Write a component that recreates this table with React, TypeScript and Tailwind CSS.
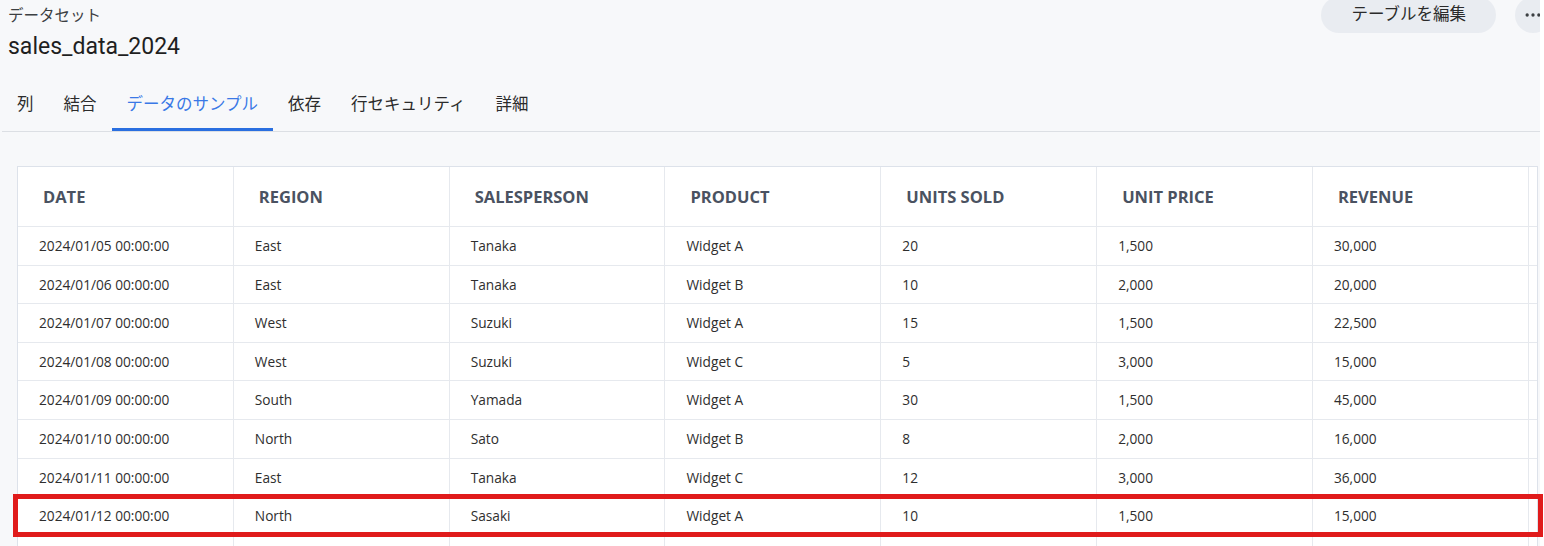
import { MoreHorizontal } from 'lucide-react'

const columns = ['DATE', 'REGION', 'SALESPERSON', 'PRODUCT', 'UNITS SOLD', 'UNIT PRICE', 'REVENUE']

const rows = [
  ['2024/01/05 00:00:00', 'East', 'Tanaka', 'Widget A', '20', '1,500', '30,000'],
  ['2024/01/06 00:00:00', 'East', 'Tanaka', 'Widget B', '10', '2,000', '20,000'],
  ['2024/01/07 00:00:00', 'West', 'Suzuki', 'Widget A', '15', '1,500', '22,500'],
  ['2024/01/08 00:00:00', 'West', 'Suzuki', 'Widget C', '5', '3,000', '15,000'],
  ['2024/01/09 00:00:00', 'South', 'Yamada', 'Widget A', '30', '1,500', '45,000'],
  ['2024/01/10 00:00:00', 'North', 'Sato', 'Widget B', '8', '2,000', '16,000'],
  ['2024/01/11 00:00:00', 'East', 'Tanaka', 'Widget C', '12', '3,000', '36,000'],
  ['2024/01/12 00:00:00', 'North', 'Sasaki', 'Widget A', '10', '1,500', '15,000'],
]

const tabs = ['列', '結合', 'データのサンプル', '依存', '行セキュリティ', '詳細']
const activeTab = 'データのサンプル'

const uiFont = "font-['Roboto','Noto_Sans_CJK_JP',sans-serif]"

export default function App() {
  return (
    <div className="relative h-[546px] w-[1544px] overflow-hidden bg-white">
      <div className={`${uiFont} h-full w-[1540px] overflow-hidden bg-[#f7f8fa] text-[#202124]`}>
        {/* Page header */}
        <div className="flex items-start justify-between pl-2">
          <div>
            <div className="mt-[6px] text-[15.5px] leading-[20px] text-[#3c4043]">データセット</div>
            <h1 className="mt-[6px] text-[23px] leading-[30px] text-[#1f1f1f]">sales_data_2024</h1>
          </div>
          <div className="-mt-[3px] -mr-[11px] flex items-center gap-[19px]">
            <button className="h-9 rounded-full bg-[#e9ecf1] px-[30px] text-[16.5px] text-[#2b2b2b]">
              テーブルを編集
            </button>
            <button className="flex h-9 w-9 items-center justify-center rounded-full bg-[#e9ecf1] text-[#3c4043]">
              <MoreHorizontal size={20} strokeWidth={2} />
            </button>
          </div>
        </div>

        {/* Tabs */}
        <div className="mt-[15px] ml-[2px] flex border-b border-[#dcdfe4]">
          {tabs.map(t => (
            <div
              key={t}
              className={`flex h-[54px] items-center border-b-[3px] px-[15px] pt-[5px] text-[16.5px] ${
                t === activeTab ? 'border-[#2a6fe0] text-[#3a78e6]' : 'border-transparent text-[#2b2b2b]'
              }`}
            >
              {t}
            </div>
          ))}
        </div>

        {/* Sample data table */}
        <div className="mt-[34px] ml-[17px] w-[1521px] border border-[#dde2ea] bg-white font-['Open_Sans',sans-serif]">
          <div className="flex h-[60px] border-b border-[#e6e9ee]">
            {columns.map(c => (
              <div
                key={c}
                className="flex w-[215.83px] items-center border-r border-[#e6e9ee] pt-[2px] pl-[25px] text-[16.5px] font-bold text-[#4a5261]"
              >
                {c}
              </div>
            ))}
          </div>
          {rows.map(r => (
            <div key={r[0]} className="flex h-[38.6px] border-b border-[#e6e9ee]">
              {r.map((v, i) => (
                <div
                  key={i}
                  className="flex w-[215.83px] items-center border-r border-[#e6e9ee] pt-[1px] pl-[21px] text-[13.7px] text-[#2e2e2e]"
                >
                  {v}
                </div>
              ))}
            </div>
          ))}
          <div className="flex h-[40px]">
            {columns.map(c => (
              <div key={c} className="w-[215.83px] border-r border-[#e6e9ee]" />
            ))}
          </div>
        </div>
      </div>

      {/* Highlight annotation */}
      <div className="pointer-events-none absolute top-[494px] left-[13px] h-[43px] w-[1530px] border-[5px] border-[#e01b1b]" />
    </div>
  )
}
